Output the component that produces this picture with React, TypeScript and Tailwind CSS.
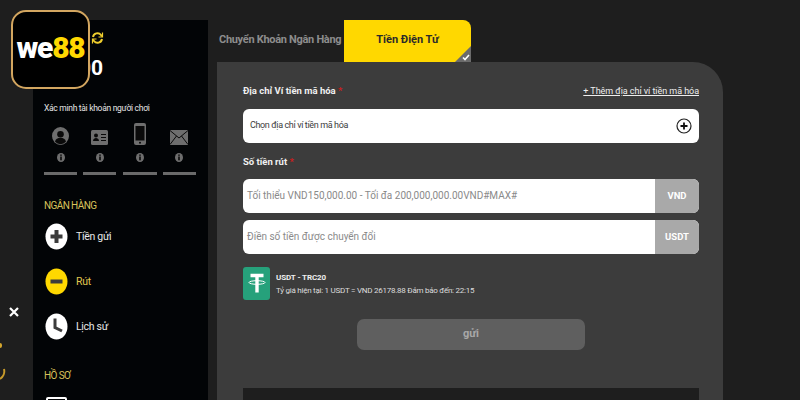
import React from "react";

const f = { fontFamily: '"Roboto","Noto Sans",sans-serif' };

function PersonIcon() {
  return (
    <svg width="17" height="18" viewBox="0 0 17 18">
      <ellipse cx="8.5" cy="9" rx="8.5" ry="9" fill="#6e6e6e" />
      <circle cx="8.500" cy="7.200" r="3.300" fill="#0a0a0a" />
      <path d="M3 14.800c.6-3 2.800-4 5.500-4s4.900 1 5.500 4a7.500 7.500 0 0 1-11 0z" fill="#0a0a0a" />
    </svg>
  );
}
function CardIcon() {
  return (
    <svg width="17" height="15" viewBox="0 0 17 15">
      <rect width="17" height="15" rx="1.500" fill="#6e6e6e" />
      <circle cx="5" cy="5.500" r="2" fill="#0a0a0a" />
      <path d="M2 11c.3-2.300 1.500-3 3-3s2.700.7 3 3z" fill="#0a0a0a" />
      <path d="M10 4.500h5M10 7.500h5M10 10.500h5" stroke="#0a0a0a" strokeWidth="1.200" />
    </svg>
  );
}
function PhoneIcon() {
  return (
    <svg width="12" height="22" viewBox="0 0 12 22">
      <rect width="12" height="22" rx="2" fill="#6e6e6e" />
      <rect x="1.500" y="3" width="9" height="14.500" fill="#0a0a0a" />
      <circle cx="6" cy="19.700" r="1" fill="#0a0a0a" />
    </svg>
  );
}
function MailIcon() {
  return (
    <svg width="18" height="15" viewBox="0 0 18 15">
      <rect width="18" height="15" fill="#6e6e6e" />
      <path d="M0 .5l9 7.500 9-7.500M0 14.500l6.500-8.500M18 14.500l-6.500-8.500" stroke="#0a0a0a" strokeWidth="1" fill="none" />
    </svg>
  );
}
function InfoDot() {
  return (
    <svg width="8" height="9" viewBox="0 0 8 9">
      <ellipse cx="4" cy="4.500" rx="4" ry="4.500" fill="#6e6e6e" />
      <rect x="3.200" y="1.500" width="1.600" height="1.300" fill="#0a0a0a" />
      <rect x="3.200" y="3.500" width="1.600" height="3.800" fill="#0a0a0a" />
    </svg>
  );
}
function Verify({ icon, w }: { icon: React.ReactNode; w: string }) {
  return (
    <div className={`${w} flex flex-col items-center`}>
      <div className="h-[23px] flex items-end justify-center">{icon}</div>
      <div className="mt-[8px] h-[9px] flex"><InfoDot /></div>
      <div className="mt-[10px] h-[3px] w-full bg-[#6a6a6a]" />
    </div>
  );
}
function RoundIcon({ color, children }: { color: string; children: React.ReactNode }) {
  return (
    <svg width="23" height="27" viewBox="0 0 23 27">
      <ellipse cx="11.500" cy="13.500" rx="11" ry="13" fill={color} />
      {children}
    </svg>
  );
}
function NavItem({ icon, label, color, mt }: { icon: React.ReactNode; label: string; color: string; mt: string }) {
  return (
    <div className={`flex items-center h-[27px] ${mt}`}>
      <div className="w-[31px] ml-[1px] flex">{icon}</div>
      <span className={`text-[10.500px] tracking-[-0.3px] ${color}`}>{label}</span>
    </div>
  );
}

export default function App() {
  return (
    <div className="relative w-[800px] h-[400px] overflow-hidden bg-[#1e1e1e] flex" style={f}>
      {/* Logo overlay */}
      <div className="absolute left-[11px] top-[10px] w-[79px] h-[79px] rounded-[15px] border-2 border-[#d3a660] bg-black flex items-center justify-center pb-[3px] z-10">
        <span className="text-[30px] leading-none font-black tracking-[-1.200px] text-white">
          we<span className="text-[#ffd800]">88</span>
        </span>
      </div>

      {/* Left gutter */}
      <div className="w-[33px] relative shrink-0">
        <div className="absolute left-[8px] top-[305px]">
          <svg width="12" height="14" viewBox="0 0 12 14"><path d="M2 3l8 8M10 3l-8 8" stroke="#fff" strokeWidth="2.200" /></svg>
        </div>
        <div className="absolute left-0 top-[343px] w-[2px] h-[5px] rounded-r bg-[#d4a62e]" />
        <div className="absolute left-0 top-[368px]">
          <svg width="6" height="13" viewBox="0 0 6 13" fill="none">
            <path d="M4 1c1 4-1 8-4 10" stroke="#c79a2a" strokeWidth="2" />
          </svg>
        </div>
      </div>

      {/* Sidebar */}
      <div className="mt-[20px] w-[175px] h-[380px] bg-[#020406] shrink-0 px-[11px] pt-[10px]">
        <div className="pl-[47px] h-[14px] flex">
          <svg className="mt-[1px]" width="13" height="14" viewBox="0 0 13 14" fill="none" stroke="#f0cf2e" strokeWidth="2">
            <path d="M2 6a4.500 4.500 0 0 1 8-2l1 1.500M11 8a4.500 4.500 0 0 1-8 2L2 8.500" />
            <path d="M11.500 1.500v4.500h-4M1.500 12.500V8h4" strokeWidth="1.200" />
          </svg>
        </div>
        <div className="pl-[35px] mt-[12px] h-[24px] text-[21px] leading-[24px] font-bold text-white">00</div>
        <div className="mt-[22px] text-[8.500px] leading-[12px] tracking-[-0.3px] text-[#e4e4e4]">Xác minh tài khoản người chơi</div>
        <div className="mt-[8px] flex w-[152px] justify-between">
          <Verify icon={<PersonIcon />} w="w-[33px]" />
          <Verify icon={<CardIcon />} w="w-[33px]" />
          <Verify icon={<PhoneIcon />} w="w-[34px]" />
          <Verify icon={<MailIcon />} w="w-[33px]" />
        </div>
        <div className="mt-[24px] text-[10px] leading-[14px] tracking-[-0.6px] text-[#d8c25a]">NGÂN HÀNG</div>
        <NavItem
          mt="mt-[10px]"
          color="text-[#e8e8e8]"
          label="Tiền gửi"
          icon={<RoundIcon color="#ffffff"><path d="M11.500 7v13M5.500 13.500h12" stroke="#3c3c3c" strokeWidth="4" /></RoundIcon>}
        />
        <NavItem
          mt="mt-[18px]"
          color="text-[#e0c84f]"
          label="Rút"
          icon={<RoundIcon color="#ffd800"><path d="M5.500 13.500h12" stroke="#3c3c3c" strokeWidth="4" /></RoundIcon>}
        />
        <NavItem
          mt="mt-[18px]"
          color="text-[#e8e8e8]"
          label="Lịch sử"
          icon={<RoundIcon color="#ffffff"><path d="M10 5.500v9l7 3.500" stroke="#3c3c3c" strokeWidth="3" fill="none" /></RoundIcon>}
        />
        <div className="mt-[29px] text-[10px] leading-[14px] tracking-[-0.6px] text-[#d8c25a]">HỒ SƠ</div>
        <div className="mt-[14px] ml-[2px] w-[21px] h-[20px] rounded-[2px] border-2 border-white" />
      </div>

      {/* Main */}
      <div className="ml-[9px] mt-[20px] w-[506px] shrink-0 flex flex-col">
        <div className="flex h-[42px] shrink-0">
          <div className="ml-[2px] w-[125px] pt-[12px] text-[11px] leading-[16px] tracking-[-0.3px] font-bold text-[#8d8d8d] whitespace-nowrap">
            Chuyển Khoản Ngân Hàng
          </div>
          <div className="relative w-[127px] rounded-tr-[8px] bg-[#ffd800] flex justify-center pt-[12px] text-[11px] leading-[16px] font-bold text-[#2a2a2a] overflow-hidden">
            Tiền Điện Tử
            <div className="absolute right-0 bottom-0 w-0 h-0 border-l-[16px] border-l-transparent border-b-[16px] border-b-[#6b6b6b]" />
            <svg className="absolute right-[1px] bottom-[1px]" width="8" height="7" viewBox="0 0 8 7" fill="none">
              <path d="M1 3.500l2 2 4-4.500" stroke="#fff" strokeWidth="1.600" />
            </svg>
          </div>
        </div>

        <div className="flex-1 bg-[#3c3c3c] rounded-tr-[30px] pl-[26px] pr-[24px] pt-[22px]">
          <div className="flex items-center justify-between h-[14px] pt-[1px]">
            <div className="text-[9.500px] font-bold text-[#f0f0f0]">
              Địa chỉ Ví tiền mã hóa <span className="text-[#c81e1e]">*</span>
            </div>
            <div className="text-[9px] tracking-[-0.05px] text-[#eeeeee] underline">+ Thêm địa chỉ ví tiền mã hóa</div>
          </div>
          <div className="mt-[11px] h-[34px] rounded-[6px] bg-white flex items-center justify-between pl-[7px] pr-[7px]">
            <span className="text-[9px] tracking-[-0.37px] text-[#3c3c3c]">Chọn địa chỉ ví tiền mã hóa</span>
            <svg width="16" height="16" viewBox="0 0 16 16" fill="none">
              <circle cx="8" cy="8" r="7" stroke="#222" strokeWidth="1.200" />
              <path d="M8 4.500v7M4.500 8h7" stroke="#111" strokeWidth="1.800" />
            </svg>
          </div>

          <div className="mt-[12px] h-[14px] flex items-center text-[9.500px] font-bold text-[#f0f0f0] whitespace-pre">
            Số tiền rút <span className="text-[#c81e1e]">*</span>
          </div>
          <div className="mt-[10px] h-[34px] rounded-[6px] bg-white overflow-hidden flex">
            <div className="flex-1 flex items-center pl-[4px] pb-[2px] text-[10px] text-[#8a8a8a]">
              Tối thiểu VND150,000.00 - Tối đa 200,000,000.00VND#MAX#
            </div>
            <div className="w-[44px] bg-[#a9a9a9] flex items-center justify-center text-[9.500px] font-bold text-white">VND</div>
          </div>
          <div className="mt-[7px] h-[34px] rounded-[6px] bg-white overflow-hidden flex">
            <div className="flex-1 flex items-center pl-[4px] pb-[2px] text-[10px] text-[#8a8a8a]">
              Điền số tiền được chuyển đổi
            </div>
            <div className="w-[44px] bg-[#a9a9a9] flex items-center justify-center text-[9.500px] font-bold text-white">USDT</div>
          </div>

          <div className="mt-[13px] flex h-[33px] items-center">
            <div className="w-[27px] h-[33px] rounded-[3px] bg-[#26a17b] flex items-center justify-center shrink-0">
              <svg width="18" height="21" viewBox="0 0 18 21" fill="none">
                <path d="M2.500 2.500h13M9 2.500v17" stroke="#fff" strokeWidth="3.400" />
                <ellipse cx="9" cy="9.500" rx="8" ry="1.800" stroke="#fff" strokeWidth="1" />
              </svg>
            </div>
            <div className="ml-[6px] flex flex-col">
              <span className="text-[8px] leading-[13px] tracking-[-0.1px] font-bold text-[#eeeeee]">USDT - TRC20</span>
              <span className="text-[8px] leading-[13px] tracking-[-0.25px] text-[#dddddd]">Tỷ giá hiện tại: 1 USDT = VND 26178.88 Đảm bảo đến: 22:15</span>
            </div>
          </div>

          <div className="mt-[19px] ml-[114px] w-[228px] h-[31px] rounded-[7px] bg-[#5f5f5f] flex items-center justify-center text-[11px] font-bold text-[#a8a8a8]">
            gửi
          </div>

          <div className="mt-[38px] h-[40px] bg-[#1e1e1e]" />
        </div>
      </div>
    </div>
  );
}
